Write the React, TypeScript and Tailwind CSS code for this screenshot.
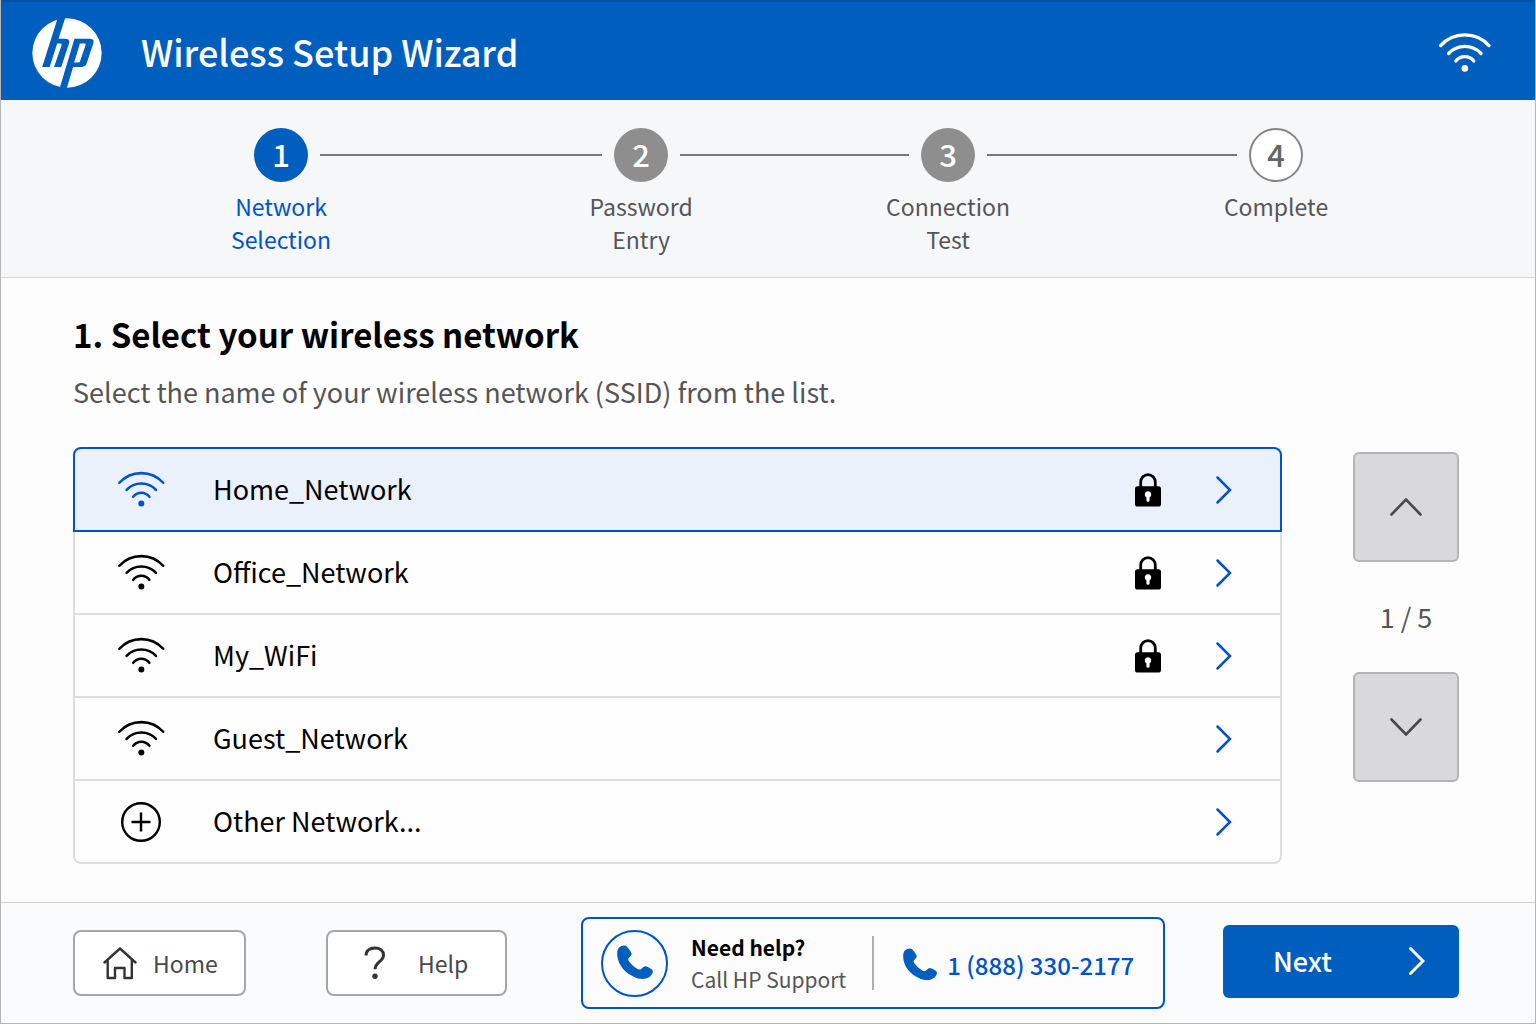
import React, { type FC, useState } from 'react';
import { clsx } from 'clsx';

const steps = [
  { id: 1, lines: ['Network', 'Selection'], connector: 'flex-[281]' },
  { id: 2, lines: ['Password', 'Entry'], connector: 'flex-[228]' },
  { id: 3, lines: ['Connection', 'Test'], connector: 'flex-[249]' },
  { id: 4, lines: ['Complete'], connector: '' },
];

const networks = [
  { name: 'Home_Network', secured: true },
  { name: 'Office_Network', secured: true },
  { name: 'My_WiFi', secured: true },
  { name: 'Guest_Network', secured: false },
  { name: 'Other Network...', secured: false, other: true },
];

type IconProps = { className?: string };

const HpLogo: FC<IconProps> = ({ className }) => (
  <svg viewBox="95 56 206 206" className={className} role="img" aria-label="HP">
    <circle cx="198" cy="159" r="102" fill="#fff" />
    <path
      fill="#005ebf"
      fillRule="evenodd"
      d="M171 55H193L173 117H192Q208 117 204 131L181 200H160L182 136Q183 131 179 131H169L147 200H125ZM220 117H265Q280 117 275 132L256 189Q252 200 240 200H216L197 264H176ZM236 131L219 187H232Q235 187 236 184L253 135Q254 131 250 131Z"
    />
  </svg>
);

const WifiIcon: FC<IconProps & { weight?: number }> = ({
  className,
  weight = 8.5,
}) => (
  <svg viewBox="115 95 160 125" className={className} aria-hidden="true">
    <g
      fill="none"
      stroke="currentColor"
      strokeWidth={weight}
      strokeLinecap="round"
    >
      <path d="M123 135A99 99 0 0 1 269 135" />
      <path d="M147 159A67 67 0 0 1 245 159" />
      <path d="M169 182A34 34 0 0 1 223 182" />
    </g>
    <circle cx="196" cy="204" r="10" fill="currentColor" />
  </svg>
);

const PlusCircleIcon: FC<IconProps> = ({ className }) => (
  <svg viewBox="0 0 40 40" className={className} aria-hidden="true">
    <g fill="none" stroke="currentColor" strokeWidth="2.4">
      <circle cx="20" cy="20" r="18.8" />
      <path d="M20 10.5v19M10.5 20h19" />
    </g>
  </svg>
);

const LockIcon: FC<IconProps> = ({ className }) => (
  <svg
    viewBox="0 0 26 34"
    className={className}
    role="img"
    aria-label="Secured"
  >
    <path
      d="M5.7 15V9.2a7.3 7.6 0 0 1 14.6 0V15"
      fill="none"
      stroke="currentColor"
      strokeWidth="2.8"
    />
    <rect y="13.3" width="26" height="20.2" rx="2.6" fill="currentColor" />
    <path
      d="M13 18.2a3.2 3.2 0 0 1 1.6 6v3a1.6 1.6 0 0 1-3.2 0v-3a3.2 3.2 0 0 1 1.6-6Z"
      fill="#fff"
    />
  </svg>
);

const Chevron: FC<IconProps & { weight?: number }> = ({
  className,
  weight = 2.5,
}) => (
  <svg viewBox="0 0 16 28" className={className} aria-hidden="true">
    <path
      d="M1.5 1.5 14 14 1.5 26.5"
      fill="none"
      stroke="currentColor"
      strokeWidth={weight}
      strokeLinecap="round"
    />
  </svg>
);

const PagerChevron: FC<IconProps> = ({ className }) => (
  <svg viewBox="0 0 32 18" className={className} aria-hidden="true">
    <path
      d="M1.5 16.5 16 1.5l14.5 15"
      fill="none"
      stroke="currentColor"
      strokeWidth="2.6"
      strokeLinecap="round"
    />
  </svg>
);

const HomeIcon: FC<IconProps> = ({ className }) => (
  <svg viewBox="0 0 34 34" className={className} aria-hidden="true">
    <path
      d="M1.5 16.5 17 2.5l15.5 14M4.7 14v18H12V22h9.5v10h7.3V14"
      fill="none"
      stroke="currentColor"
      strokeWidth="2.4"
      strokeLinecap="round"
      strokeLinejoin="round"
    />
  </svg>
);

const QuestionIcon: FC<IconProps> = ({ className }) => (
  <svg viewBox="0 0 22 34" className={className} aria-hidden="true">
    <path
      d="M2 9.5C2 4.8 5.8 2 10.8 2 16 2 19.5 5 19.5 9.2c0 6.3-8.4 6.8-8.4 14"
      fill="none"
      stroke="currentColor"
      strokeWidth="3"
    />
    <circle cx="11" cy="30.3" r="2.7" fill="currentColor" />
  </svg>
);

const PhoneIcon: FC<IconProps> = ({ className }) => (
  <svg viewBox="0 0 36 36" className={className} aria-hidden="true">
    <path
      d="M2 2.6C4.5.2 8-.3 9.8 1.6c1.6 1.6 3.500 4.300 4.700 6.600.9 1.800-3.500 4.600-3.300 6.200.4 2.900 7.800 9.600 11.400 10.200 1.700.2 4-3.700 5.800-3.400 2.400.5 5.400 2 6.800 3.500 1.700 1.900.1 4.800-1.900 6.500-3.900 3.300-10.500 3.700-16.600.5C8.400 28 1.200 20.400.3 10.800 0 7.700.2 4.400 2 2.600Z"
      fill="currentColor"
    />
  </svg>
);

const StepList: FC = () => (
  <ol className="flex border-b border-[#d5d6d8] bg-[#f6f7f9] pt-7 pr-[232px] pb-[21px] pl-[253px]">
    {steps.map((step, index) => (
      <React.Fragment key={step.id}>
        <li
          className="flex w-[54px] shrink-0 flex-col items-center"
          aria-current={step.id === 1 ? 'step' : undefined}
        >
          <span
            className={clsx(
              'flex size-[54px] items-center justify-center rounded-full pb-1 text-[31px] leading-none font-medium',
              step.id === 1 && 'bg-[#005ebf] text-white',
              (step.id === 2 || step.id === 3) && 'bg-[#8e8e8e] text-white',
              step.id === 4 && 'border-2 border-[#858585] bg-white text-[#666]',
            )}
          >
            {step.id}
          </span>
          <span
            className={clsx(
              'mt-2 flex flex-col text-center text-[23px] leading-[33px] whitespace-nowrap',
              step.id === 1 ? 'text-[#0052cc]' : 'text-[#555]',
            )}
          >
            {step.lines.map(line => (
              <span key={line}>{line}</span>
            ))}
          </span>
        </li>
        {index < steps.length - 1 ? (
          <li
            role="presentation"
            className={clsx('mx-3 mt-[26px] h-0.5 bg-[#777]', step.connector)}
          />
        ) : null}
      </React.Fragment>
    ))}
  </ol>
);

export default function App() {
  const [selected, setSelected] = useState('Home_Network');

  return (
    <div className="flex min-h-screen flex-col border border-t-0 border-[#b4b6b8] bg-[#fdfdfd] font-['Noto_Sans_CJK_SC','Noto_Sans',sans-serif] text-black">
      <header className="flex h-[100px] items-center border-t-2 border-[#0054a6] bg-[#005ebf] pt-1 pr-11 pl-[31px] text-white">
        <HpLogo className="size-[70px]" />
        <h1 className="mb-1 ml-[39px] flex-1 text-4xl font-medium">
          Wireless Setup Wizard
        </h1>
        <WifiIcon className="h-[42px] w-[53px]" weight={10} />
      </header>

      <StepList />

      <main className="flex-1 pt-9 pr-[76px] pb-8 pl-[72px]">
        <h2 className="text-[33px] leading-10 font-bold">
          1. Select your wireless network
        </h2>
        <p className="mt-5 text-[27px] leading-9 text-[#555]">
          Select the name of your wireless network (SSID) from the list.
        </p>

        <div className="mt-[37px] flex items-start gap-[71px]">
          <ul className="flex-1">
            {networks.map(network => {
              const active = network.name === selected;
              return (
                <li key={network.name} className="group">
                  <button
                    type="button"
                    aria-pressed={active}
                    onClick={() => setSelected(network.name)}
                    className={clsx(
                      'flex h-[83px] w-full cursor-pointer items-center pr-12 pl-[42px] text-left text-[27px] group-first:h-[85px] group-first:rounded-t-lg group-last:rounded-b-lg',
                      active
                        ? 'border-2 border-[#0052cc] bg-[#ebf1fa]'
                        : 'border-x-2 border-b-2 border-[#dcdddf] bg-[#fefefe]',
                    )}
                  >
                    <span
                      className={clsx(
                        'flex w-12 justify-center',
                        active && 'text-[#0052cc]',
                      )}
                    >
                      {network.other ? (
                        <PlusCircleIcon className="size-10" />
                      ) : (
                        <WifiIcon className="h-[39px] w-[49px]" />
                      )}
                    </span>
                    <span className="ml-12 flex-1">{network.name}</span>
                    {network.secured ? (
                      <LockIcon className="mr-[55px] h-[34px] w-[26px]" />
                    ) : null}
                    <Chevron className="h-7 w-4 text-[#0052cc]" />
                  </button>
                </li>
              );
            })}
          </ul>

          <div className="mt-[5px] flex w-[106px] flex-col items-center">
            <button
              type="button"
              aria-label="Previous page"
              className="flex h-[110px] w-full cursor-pointer items-center justify-center rounded-md border-2 border-[#b3b4b5] bg-[#d9d9db] text-[#484848]"
            >
              <PagerChevron className="h-[18px] w-8" />
            </button>
            <p className="my-9 text-[27px] leading-[38px] text-[#555]">1 / 5</p>
            <button
              type="button"
              aria-label="Next page"
              className="flex h-[110px] w-full cursor-pointer items-center justify-center rounded-md border-2 border-[#b3b4b5] bg-[#d9d9db] text-[#484848]"
            >
              <PagerChevron className="h-[18px] w-8 rotate-180" />
            </button>
          </div>
        </div>
      </main>

      <footer className="flex h-[121px] items-center border-t border-[#d0d1d3] bg-[#fafbfc] pr-[76px] pl-[72px]">
        <button
          type="button"
          className="flex h-[66px] w-[173px] cursor-pointer items-center rounded-lg border-2 border-[#a5a6a8] bg-white pl-7 text-[23px] text-[#484848]"
        >
          <HomeIcon className="size-[34px] text-[#333]" />
          <span className="ml-4">Home</span>
        </button>
        <button
          type="button"
          className="ml-20 flex h-[66px] w-[181px] cursor-pointer items-center rounded-lg border-2 border-[#a5a6a8] bg-white pl-9 text-[23px] text-[#484848]"
        >
          <QuestionIcon className="h-[34px] w-[22px] text-[#333]" />
          <span className="ml-8">Help</span>
        </button>

        <section className="mr-[58px] ml-[74px] flex h-[92px] flex-1 items-center rounded-lg border-2 border-[#0052cc] bg-[#fcfcfd] pl-[18px]">
          <span className="flex size-[67px] items-center justify-center rounded-full border-2 border-[#0052cc] text-[#005ebf]">
            <PhoneIcon className="size-9" />
          </span>
          <div className="ml-[23px] text-[21px] leading-8">
            <p className="font-bold">Need help?</p>
            <p className="text-[#555]">Call HP Support</p>
          </div>
          <span className="ml-[26px] h-[54px] w-0.5 bg-[#b0b0b0]" />
          <a
            href="tel:+18883302177"
            className="ml-[29px] flex items-center pt-1 text-2xl font-medium text-[#0052cc]"
          >
            <PhoneIcon className="mr-2.5 size-[34px] text-[#005ebf]" />
            1 (888) 330-2177
          </a>
        </section>

        <button
          type="button"
          className="mb-1 flex h-[73px] w-[236px] cursor-pointer items-center justify-between rounded-md bg-[#005ebf] pr-[34px] pl-[50px] text-[27px] font-medium text-white"
        >
          Next
          <Chevron className="h-7 w-4" weight={3} />
        </button>
      </footer>
    </div>
  );
}
